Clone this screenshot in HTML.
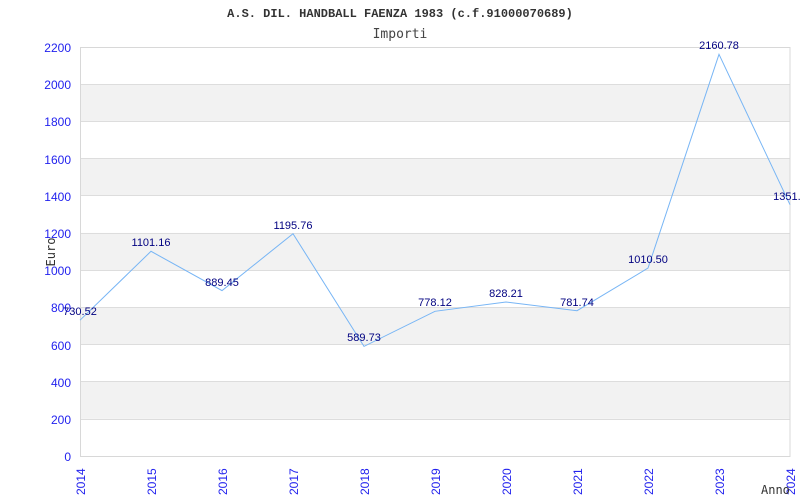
<!DOCTYPE html>
<html><head><style>body{margin:0;background:#fff}svg{display:block}</style></head><body>
<svg width="800" height="500" xmlns="http://www.w3.org/2000/svg">
<rect width="800" height="500" fill="#fff"/>
<text x="400" y="17" text-anchor="middle" font-family="Liberation Mono, monospace" font-size="12" font-weight="bold" fill="#333">A.S. DIL. HANDBALL FAENZA 1983 (c.f.91000070689)</text>
<text x="400" y="38" text-anchor="middle" font-family="DejaVu Sans Mono, monospace" font-size="13" fill="#444">Importi</text>
<g fill="#f2f2f2">
<rect x="80" y="84.2" width="710" height="37.2"/>
<rect x="80" y="158.5" width="710" height="37.2"/>
<rect x="80" y="232.9" width="710" height="37.2"/>
<rect x="80" y="307.3" width="710" height="37.2"/>
<rect x="80" y="381.6" width="710" height="37.2"/>
</g>
<g stroke="#ddd" stroke-width="1">
<line x1="80" x2="790" y1="84.5" y2="84.5"/><line x1="80" x2="790" y1="121.5" y2="121.5"/>
<line x1="80" x2="790" y1="158.5" y2="158.5"/><line x1="80" x2="790" y1="195.5" y2="195.5"/>
<line x1="80" x2="790" y1="233.5" y2="233.5"/><line x1="80" x2="790" y1="270.5" y2="270.5"/>
<line x1="80" x2="790" y1="307.5" y2="307.5"/><line x1="80" x2="790" y1="344.5" y2="344.5"/>
<line x1="80" x2="790" y1="381.5" y2="381.5"/><line x1="80" x2="790" y1="419.5" y2="419.5"/>
</g>
<rect x="80.5" y="47.5" width="709.5" height="409" fill="none" stroke="#d8d8d8"/>
<g font-family="Liberation Sans, sans-serif" font-size="12" fill="#2222ee" text-anchor="end">
<text x="71" y="52">2200</text><text x="71" y="89">2000</text><text x="71" y="126">1800</text>
<text x="71" y="164">1600</text><text x="71" y="201">1400</text><text x="71" y="238">1200</text>
<text x="71" y="275">1000</text><text x="71" y="312">800</text><text x="71" y="350">600</text>
<text x="71" y="387">400</text><text x="71" y="424">200</text><text x="71" y="461">0</text>
</g>
<g font-family="Liberation Sans, sans-serif" font-size="12" fill="#2222ee">
<text transform="translate(85,495) rotate(-90)">2014</text>
<text transform="translate(156,495) rotate(-90)">2015</text>
<text transform="translate(227,495) rotate(-90)">2016</text>
<text transform="translate(298,495) rotate(-90)">2017</text>
<text transform="translate(369,495) rotate(-90)">2018</text>
<text transform="translate(440,495) rotate(-90)">2019</text>
<text transform="translate(511,495) rotate(-90)">2020</text>
<text transform="translate(582,495) rotate(-90)">2021</text>
<text transform="translate(653,495) rotate(-90)">2022</text>
<text transform="translate(724,495) rotate(-90)">2023</text>
<text transform="translate(795,495) rotate(-90)">2024</text>
</g>
<text transform="translate(55,252) rotate(-90)" text-anchor="middle" font-family="DejaVu Sans Mono, monospace" font-size="12" fill="#333">Euro</text>
<text x="761" y="494" font-family="DejaVu Sans Mono, monospace" font-size="12" fill="#333">Anno</text>
<polyline fill="none" stroke="#77b5f5" stroke-width="1" points="80,320.2 151,251.3 222,290.6 293,233.7 364,346.4 435,311.3 506,302 577,310.7 648,268.1 719,54.3 790,204.7"/>
<g font-family="Liberation Sans, sans-serif" font-size="11" fill="#000080" text-anchor="middle">
<text x="80" y="315">730.52</text><text x="151" y="246">1101.16</text><text x="222" y="286">889.45</text>
<text x="293" y="229">1195.76</text><text x="364" y="341">589.73</text><text x="435" y="306">778.12</text>
<text x="506" y="297">828.21</text><text x="577" y="306">781.74</text><text x="648" y="263">1010.50</text>
<text x="719" y="49">2160.78</text><text x="790" y="200">1351.5</text>
</g>
</svg>
</body></html>
